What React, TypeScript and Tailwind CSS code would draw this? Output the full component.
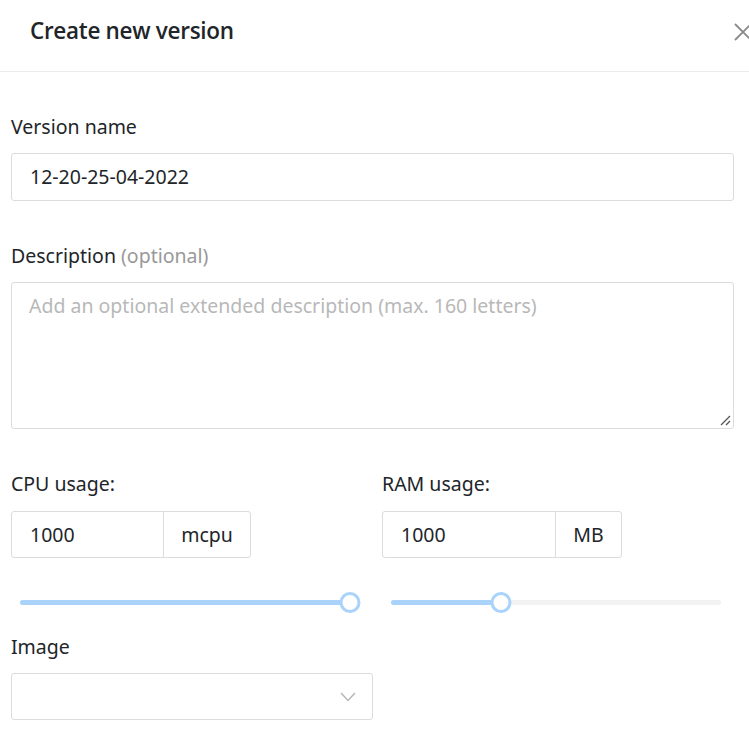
import React from "react";

function Slider({ pct, width }: { pct: number; width: number }) {
  return (
    <div className="relative h-[22px]" style={{ width }}>
      <div className="absolute left-0 right-0 top-[8px] h-[5px] rounded-full bg-[#f2f2f2]" />
      <div className="absolute left-0 top-[8px] h-[5px] rounded-full bg-[#a9d3fb]" style={{ width: `${pct}%` }} />
      <div
        className="absolute top-0 h-[21px] w-[21px] -translate-x-1/2 rounded-full border-[3px] border-[#a9d3fb] bg-white"
        style={{ left: `${pct}%` }}
      />
    </div>
  );
}

export default function App() {
  return (
    <div
      className="w-[749px] h-[739px] overflow-hidden bg-white text-[#212529]"
      style={{ fontFamily: '"Noto Sans", "Open Sans", sans-serif' }}
    >
      <div className="flex h-[72px] items-start border-b border-[#e9ecef] pl-[30px]">
        <div
          className="pt-[17px] text-[22.5px] leading-[28px] font-semibold tracking-[-0.3px]"
          style={{ fontFamily: '"Open Sans", "Noto Sans", sans-serif' }}
        >
          Create new version
        </div>
        <svg className="ml-auto mt-[23px] -mr-[3px]" width="18" height="18" viewBox="0 0 18 18">
          <path d="M1 1 L17 17 M17 1 L1 17" stroke="#8a8a8a" strokeWidth="1.8" fill="none" />
        </svg>
      </div>

      <div className="pl-[11px] pt-[41px]">
        <div className="text-[19.5px] leading-[27px]">Version name</div>
        <div className="mt-[13px] flex h-[48px] w-[723px] items-center rounded-[3px] border border-[#dcdcdc] pl-[18px] text-[19.5px]">
          12-20-25-04-2022
        </div>

        <div className="mt-[41px] text-[19.5px] leading-[27px]">
          Description <span className="text-[#999999]">(optional)</span>
        </div>
        <div className="relative mt-[13px] h-[147px] w-[723px] rounded-[3px] border border-[#dcdcdc] pl-[17px] pt-[9px] text-[19.5px] leading-[27px] text-[#b8b8b8]">
          Add an optional extended description (max. 160 letters)
          <svg className="absolute bottom-[2px] right-[2px]" width="12" height="12" viewBox="0 0 12 12">
            <path d="M2 11 L11 2 M7 11 L11 7" stroke="#555" strokeWidth="1.3" fill="none" />
          </svg>
        </div>

        <div className="mt-[41px] flex">
          <div className="w-[371px]">
            <div className="text-[19.5px] leading-[27px]">CPU usage:</div>
            <div className="mt-[14px] flex h-[47px] w-[240px] rounded-[3px] border border-[#dcdcdc] text-[19.5px]">
              <div className="flex w-[152px] items-center border-r border-[#dcdcdc] pl-[18px]">1000</div>
              <div className="flex flex-1 items-center justify-center">mcpu</div>
            </div>
          </div>
          <div>
            <div className="text-[19.5px] leading-[27px]">RAM usage:</div>
            <div className="mt-[14px] flex h-[47px] w-[240px] rounded-[3px] border border-[#dcdcdc] text-[19.5px]">
              <div className="flex w-[173px] items-center border-r border-[#dcdcdc] pl-[18px]">1000</div>
              <div className="flex flex-1 items-center justify-center">MB</div>
            </div>
          </div>
        </div>

        <div className="mt-[34px] flex">
          <div className="pl-[9px] w-[380px]">
            <Slider pct={100} width={330} />
          </div>
          <div>
            <Slider pct={33.4} width={330} />
          </div>
        </div>

        <div className="mt-[19px] text-[19.5px] leading-[27px]">Image</div>
        <div className="mt-[13px] flex h-[47px] w-[362px] items-center justify-end rounded-[3px] border border-[#dcdcdc] pr-[16px]">
          <svg width="16" height="10" viewBox="0 0 16 10">
            <path d="M1 1 L8 8.5 L15 1" stroke="#b5b5b5" strokeWidth="1.4" fill="none" />
          </svg>
        </div>
      </div>
    </div>
  );
}
